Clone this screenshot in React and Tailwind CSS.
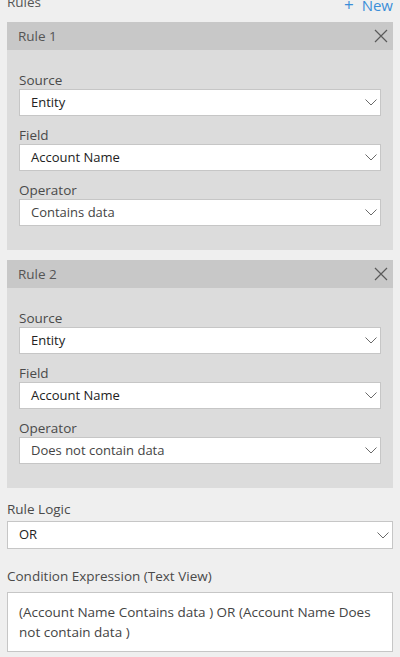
import React from 'react';

const Chevron = () => (
  <svg width="12" height="7" viewBox="0 0 12 7" className="mr-[3px] shrink-0">
    <path d="M0.5 0.5 L6 6 L11.5 0.5" fill="none" stroke="#6a6a6a" strokeWidth="1" />
  </svg>
);

const Close = () => (
  <svg width="14" height="14" viewBox="0 0 14 14">
    <path d="M1 1 L13 13 M13 1 L1 13" fill="none" stroke="#5a5a5a" strokeWidth="1.2" />
  </svg>
);

const Select = ({ value, muted, h = 'h-[27px]' }) => (
  <div className={`${h} bg-white border border-[#c6c6c6] flex items-center justify-between pl-[11px]`}>
    <span className={`text-[13px] ${muted ? 'text-[#444]' : 'text-[#222]'}`}>{value}</span>
    <Chevron />
  </div>
);

const Field = ({ label, value, muted, first }) => (
  <div className={first ? '' : 'mt-[11px]'}>
    <div className="text-[13.5px] leading-[17px] text-[#4a4a4a]">{label}</div>
    <Select value={value} muted={muted} />
  </div>
);

const RuleCard = ({ title, source, field, operator }) => (
  <div className="mx-[7px]">
    <div className="h-[28px] bg-[#c8c8c8] flex items-center justify-between pl-[11px] pr-[5px]">
      <span className="text-[13.5px] text-[#555]">{title}</span>
      <Close />
    </div>
    <div className="bg-[#dcdcdc] px-[12px] pt-[22px] pb-[24px]">
      <Field label="Source" value={source} first />
      <Field label="Field" value={field} />
      <Field label="Operator" value={operator} muted />
    </div>
  </div>
);

export default function App() {
  return (
    <div
      className="w-[400px] h-[657px] bg-[#efefef] overflow-hidden"
      style={{ fontFamily: '"Open Sans", "Noto Sans", sans-serif' }}
    >
      <div className="h-[22px] flex justify-between items-start px-[7px]">
        <span className="text-[13.5px] leading-[20px] -mt-[8px] text-[#555]">Rules</span>
        <span className="text-[15px] leading-[20px] -mt-[5px] text-[#3b8ed8] flex items-center gap-[8px]">
          <span className="text-[17px]">+</span>
          <span>New</span>
        </span>
      </div>

      <RuleCard title="Rule 1" source="Entity" field="Account Name" operator="Contains data" />
      <div className="h-[10px]" />
      <RuleCard title="Rule 2" source="Entity" field="Account Name" operator="Does not contain data" />

      <div className="px-[7px]">
        <div className="mt-[11px] text-[13.5px] leading-[20px] text-[#4a4a4a]">Rule Logic</div>
        <div className="mt-[2px]">
          <Select value="OR" h="h-[28px]" />
        </div>
        <div className="mt-[17px] text-[13.5px] leading-[20px] text-[#4a4a4a]">
          Condition Expression (Text View)
        </div>
        <div className="mt-[6px] h-[60px] bg-white border border-[#c6c6c6] pl-[11px] pr-[8px] pt-[9px] text-[13.5px] leading-[20px] text-[#444]">
          (Account Name Contains data ) OR (Account Name Does not contain data )
        </div>
      </div>
    </div>
  );
}
